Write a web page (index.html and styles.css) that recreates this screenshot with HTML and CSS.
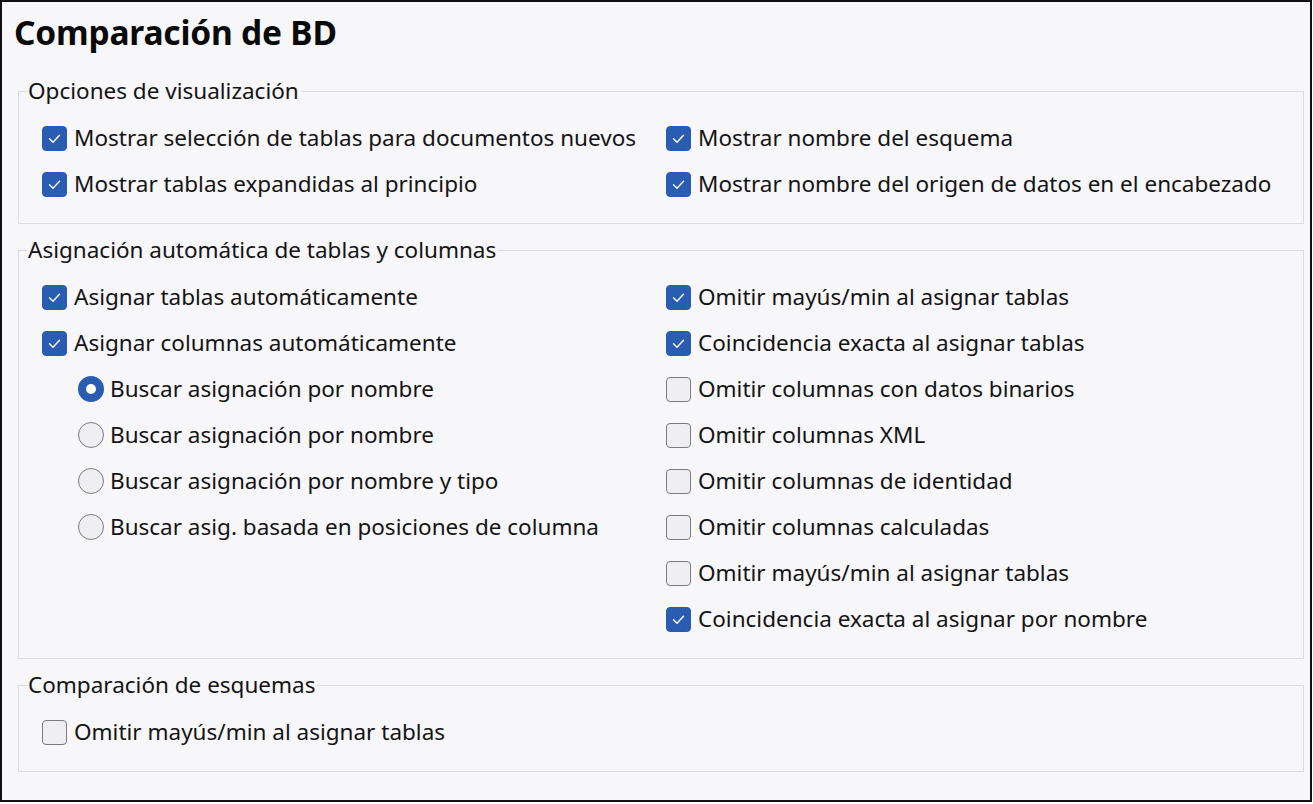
FILE: index.html
```html
<!DOCTYPE html>
<html lang="es">
<head>
<meta charset="utf-8">
<title>Comparación de BD</title>
<link rel="stylesheet" href="styles.css">
</head>
<body>
<div class="frame">
  <h1 class="title">Comparación de BD</h1>

  <fieldset class="group">
    <legend class="legend">Opciones de visualización</legend>
    <div class="grid">
      <div class="col">
        <div class="row"><span class="cb on"><svg viewBox="0 0 25 25"><path d="M7.5 12.8 L11 16.2 L17.5 9.3"/></svg></span><span class="lbl">Mostrar selección de tablas para documentos nuevos</span></div>
        <div class="row"><span class="cb on"><svg viewBox="0 0 25 25"><path d="M7.5 12.8 L11 16.2 L17.5 9.3"/></svg></span><span class="lbl">Mostrar tablas expandidas al principio</span></div>
      </div>
      <div class="col">
        <div class="row"><span class="cb on"><svg viewBox="0 0 25 25"><path d="M7.5 12.8 L11 16.2 L17.5 9.3"/></svg></span><span class="lbl">Mostrar nombre del esquema</span></div>
        <div class="row"><span class="cb on"><svg viewBox="0 0 25 25"><path d="M7.5 12.8 L11 16.2 L17.5 9.3"/></svg></span><span class="lbl">Mostrar nombre del origen de datos en el encabezado</span></div>
      </div>
    </div>
  </fieldset>

  <fieldset class="group">
    <legend class="legend">Asignación automática de tablas y columnas</legend>
    <div class="grid">
      <div class="col">
        <div class="row"><span class="cb on"><svg viewBox="0 0 25 25"><path d="M7.5 12.8 L11 16.2 L17.5 9.3"/></svg></span><span class="lbl">Asignar tablas automáticamente</span></div>
        <div class="row"><span class="cb on"><svg viewBox="0 0 25 25"><path d="M7.5 12.8 L11 16.2 L17.5 9.3"/></svg></span><span class="lbl">Asignar columnas automáticamente</span></div>
        <div class="row sub"><span class="rb on"></span><span class="lbl">Buscar asignación por nombre</span></div>
        <div class="row sub"><span class="rb"></span><span class="lbl">Buscar asignación por nombre</span></div>
        <div class="row sub"><span class="rb"></span><span class="lbl">Buscar asignación por nombre y tipo</span></div>
        <div class="row sub"><span class="rb"></span><span class="lbl">Buscar asig. basada en posiciones de columna</span></div>
      </div>
      <div class="col">
        <div class="row"><span class="cb on"><svg viewBox="0 0 25 25"><path d="M7.5 12.8 L11 16.2 L17.5 9.3"/></svg></span><span class="lbl">Omitir mayús/min al asignar tablas</span></div>
        <div class="row"><span class="cb on"><svg viewBox="0 0 25 25"><path d="M7.5 12.8 L11 16.2 L17.5 9.3"/></svg></span><span class="lbl">Coincidencia exacta al asignar tablas</span></div>
        <div class="row"><span class="cb"></span><span class="lbl">Omitir columnas con datos binarios</span></div>
        <div class="row"><span class="cb"></span><span class="lbl">Omitir columnas XML</span></div>
        <div class="row"><span class="cb"></span><span class="lbl">Omitir columnas de identidad</span></div>
        <div class="row"><span class="cb"></span><span class="lbl">Omitir columnas calculadas</span></div>
        <div class="row"><span class="cb"></span><span class="lbl">Omitir mayús/min al asignar tablas</span></div>
        <div class="row"><span class="cb on"><svg viewBox="0 0 25 25"><path d="M7.5 12.8 L11 16.2 L17.5 9.3"/></svg></span><span class="lbl">Coincidencia exacta al asignar por nombre</span></div>
      </div>
    </div>
  </fieldset>

  <fieldset class="group">
    <legend class="legend">Comparación de esquemas</legend>
    <div class="grid">
      <div class="col">
        <div class="row"><span class="cb"></span><span class="lbl">Omitir mayús/min al asignar tablas</span></div>
      </div>
    </div>
  </fieldset>
</div>
</body>
</html>
```

FILE: styles.css
```css
* { box-sizing: border-box; }
html, body { margin: 0; padding: 0; background: #ffffff; }
body {
  font-family: "Noto Sans", "Open Sans", sans-serif;
  color: #141414;
}
.frame {
  width: 1312px;
  height: 802px;
  border: 2px solid #111;
  background: #f7f6f9;
  padding: 0 6px 0 16px;
  overflow: hidden;
}
.title {
  margin: 0 0 0 -4px;
  padding-top: 8px;
  font-size: 33.5px;
  font-weight: 700;
  line-height: 44px;
  height: 77px;
  color: #0a0a0a;
  letter-spacing: -0.2px;
}
.group {
  margin: 0 0 14px 0;
  border: 1px solid #dcdbdf;
  padding: 0 22px 16px 23px;
  min-width: 0;
}
.legend {
  margin-left: -14px;
  padding: 0 2px 0 0;
  font-size: 22.5px;
  line-height: 24px;
  color: #141414;
}
.grid {
  display: grid;
  grid-template-columns: 624px 1fr;
  padding-top: 12px;
}
.row {
  display: flex;
  align-items: center;
  height: 46px;
  gap: 7px;
  font-size: 22.5px;
  white-space: nowrap;
}
.row.sub { padding-left: 36px; gap: 6px; }
.cb {
  flex: none;
  width: 25px;
  height: 25px;
  border-radius: 4px;
  border: 1px solid #7b7b7e;
  background: #efeef1;
  display: flex;
  align-items: center;
  justify-content: center;
}
.cb.on {
  background: #2a5db2;
  border-color: #2a5db2;
}
.cb svg { width: 25px; height: 25px; flex: none; }
.cb svg path {
  fill: none;
  stroke: #ffffff;
  stroke-width: 1.4;
  stroke-linecap: round;
  stroke-linejoin: round;
}
.rb {
  flex: none;
  width: 26px;
  height: 26px;
  border-radius: 50%;
  border: 1px solid #7b7b7e;
  background: #efeef1;
}
.rb.on {
  border: 8px solid #2a5db2;
  background: #ffffff;
}
.lbl { line-height: 24px; }
```
